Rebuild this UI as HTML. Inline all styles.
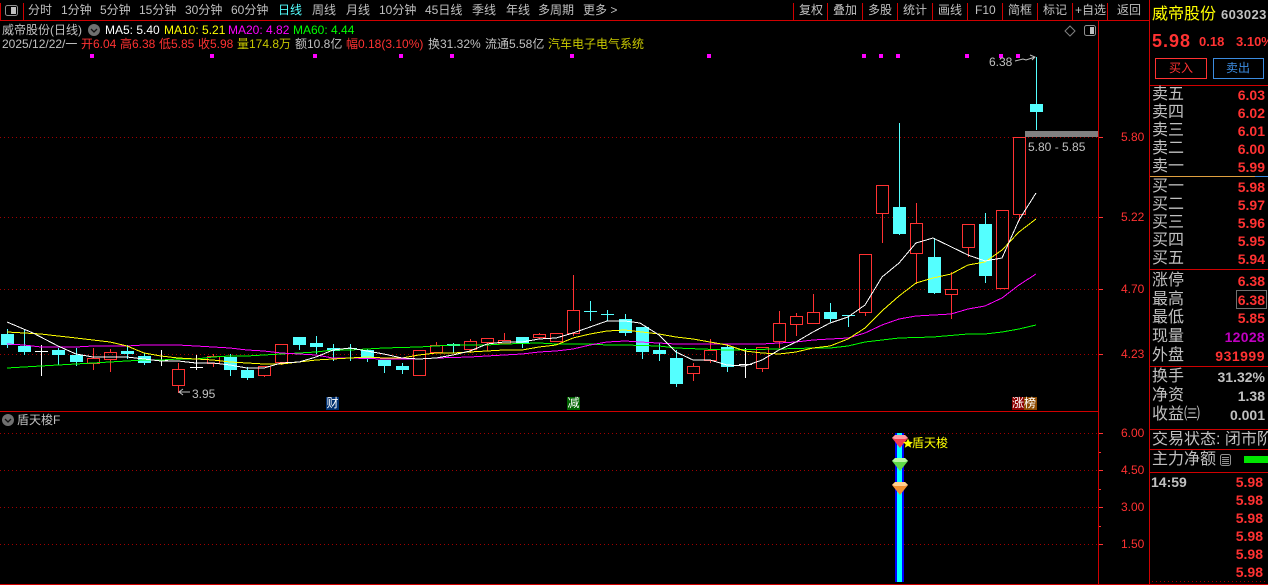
<!DOCTYPE html>
<html><head><meta charset="utf-8"><style>
html,body{margin:0;padding:0;background:#000;width:1268px;height:585px;overflow:hidden}
#r{position:relative;width:1268px;height:585px;background:#000;overflow:hidden;font-family:"Liberation Sans","WenQuanYi Zen Hei",sans-serif;font-size:12px;color:#c0c0c0}
#r div{position:absolute;white-space:nowrap}
.t{height:20px;line-height:20px;top:0}
.h{height:14px;line-height:14px;top:23px}
.k{height:14px;line-height:14px;top:37px}
.red{color:#ff3232}.y{color:#c8c800}
.l{left:1152px;font-size:16px;height:18px;line-height:18px;color:#c0c0c0}
.v{right:3px;font-size:14px;font-weight:bold;height:18px;line-height:18px;color:#ff3232}
.a{font-size:12px;color:#ff3232;left:1121px;height:14px;line-height:14px}
</style></head><body><div id="r">
<svg width="1268" height="585" style="position:absolute;left:0;top:0">
<defs><pattern id="d" width="4" height="1" patternUnits="userSpaceOnUse"><rect width="1" height="1" fill="#a00000"/></pattern></defs>
<g shape-rendering="crispEdges">
<rect x="0" y="137" width="1098" height="1" fill="url(#d)"/><rect x="0" y="217" width="1098" height="1" fill="url(#d)"/><rect x="0" y="289" width="1098" height="1" fill="url(#d)"/><rect x="0" y="354" width="1098" height="1" fill="url(#d)"/><rect x="0" y="433" width="1098" height="1" fill="url(#d)"/><rect x="0" y="470" width="1098" height="1" fill="url(#d)"/><rect x="0" y="507" width="1098" height="1" fill="url(#d)"/><rect x="0" y="544" width="1098" height="1" fill="url(#d)"/><rect x="1152" y="581" width="116" height="1" fill="url(#d)"/>
<path d="M0 20.5H1149M0 411.500H1098M1150 85.500H1268M1150 269.500H1268M1150 366.500H1268M1150 429.500H1268M1150 449.500H1268M1150 472.500H1268M0 584.500H1268M1098.500 20V585M1149.500 0V585M.5 3V20M23.500 3V20M793.500 3V20M827.500 3V20M862.500 3V20M897.500 3V20M932.500 3V20M967.500 3V20M1002.500 3V20M1037.500 3V20M1072.500 3V20M1107.500 3V20" stroke="#d00000" fill="none"/>
<path d="M1150 176.500H1255" stroke="#e0a040"/><path d="M1255 176.500H1268" stroke="#3c8ce0"/>
<path d="M1099 137.500h4M1099 217.500h4M1099 289.500h4M1099 354.500h4M1099 433.500h4M1099 452.500h2M1099 470.500h4M1099 489.500h2M1099 507.500h4M1099 526.500h2M1099 544.500h4" stroke="#ff3232"/>
<path fill="#ff00ff" d="M90 54h4v4h-4zM210 54h4v4h-4zM313 54h4v4h-4zM399 54h4v4h-4zM450 54h4v4h-4zM570 54h4v4h-4zM707 54h4v4h-4zM862 54h4v4h-4zM879 54h4v4h-4zM896 54h4v4h-4zM965 54h4v4h-4zM999 54h4v4h-4zM1016 54h4v4h-4z"/>
<rect x="1025" y="131" width="73" height="6" fill="#808080"/>
<path stroke="#54ffff" fill="none" d="M7.500 329V348M24.500 330V355M58.500 348V365M76.500 348V366M127.500 345V359M144.500 353V365M230.500 354V376M247.500 367V380M299.500 337V350M316.500 336V354M333.500 344V361M367.500 349V362M384.500 360V373M402.500 363V374M453.500 343V353M522.500 337V348M625.500 314V336M642.500 327V359M659.500 343V361M676.500 350V387M727.500 345V372M830.500 303V322M899.500 123V235M934.500 238V294M985.500 213V283M1036.500 57V130M350.500 344V361M344 348.500H357M590.500 301V321M584 311.500H597M607.500 310V321M601 314.500H614M848.500 315V327M842 315.500H855"/>
<path fill="#54ffff" d="M1 334h13v11h-13zM18 346h13v6h-13zM52 350h13v5h-13zM70 355h13v7h-13zM121 351h13v3h-13zM138 356h13v7h-13zM224 357h13v13h-13zM241 370h13v8h-13zM293 337h13v8h-13zM310 343h13v4h-13zM327 348h13v3h-13zM361 350h13v8h-13zM378 360h13v6h-13zM396 366h13v4h-13zM447 344h13v2h-13zM516 337h13v6h-13zM619 319h13v14h-13zM636 327h13v25h-13zM653 350h13v4h-13zM670 358h13v26h-13zM721 347h13v20h-13zM824 312h13v7h-13zM893 207h13v27h-13zM928 257h13v36h-13zM979 224h13v52h-13zM1030 104h13v8h-13z"/>
<path stroke="#ffffff" fill="none" d="M41.500 345V376M35 351.500H48M161.500 350V366M155 360.500H168M196.500 355V370M190 367.500H203M745.500 348V378M739 364.500H752"/>
<path stroke="#ff3232" fill="none" d="M93.500 348V358M93.500 363V370M110.500 349V352M110.500 359V372M178.500 363V369M178.500 385V393M213.500 354V356M213.500 363V367M264.500 375V377M281.500 362V365M436.500 342V345M470.500 339V341M470.500 349V353M487.500 342V351M504.500 333V340M539.500 333V334M539.500 337V339M573.500 275V310M573.500 333V336M693.500 363V366M693.500 373V381M710.500 339V350M710.500 360V363M762.500 368V372M779.500 311V323M779.500 341V348M796.500 313V316M796.500 324V336M813.500 294V312M865.500 312V316M882.500 213V243M916.500 203V223M916.500 253V284M951.500 272V289M951.500 294V319M968.500 247V257M1019.500 214V221
M87.500 358.500h12v5h-12zM104.500 352.500h12v7h-12zM172.500 369.500h12v16h-12zM207.500 356.500h12v7h-12zM258.500 366.500h12v9h-12zM275.500 344.500h12v18h-12zM413.500 350.500h12v25h-12zM430.500 345.500h12v7h-12zM464.500 341.500h12v8h-12zM481.500 338.500h12v4h-12zM498.500 340.500h12v3h-12zM533.500 334.500h12v3h-12zM550.500 333.500h12v8h-12zM567.500 310.500h12v23h-12zM687.500 366.500h12v7h-12zM704.500 350.500h12v10h-12zM756.500 347.500h12v21h-12zM773.500 323.500h12v18h-12zM790.500 316.500h12v8h-12zM807.500 312.500h12v11h-12zM859.500 254.500h12v58h-12zM876.500 185.500h12v28h-12zM910.500 223.500h12v30h-12zM945.500 289.500h12v5h-12zM962.500 224.500h12v23h-12zM996.500 210.500h12v78h-12zM1013.500 137.500h12v77h-12z"/>
<polyline fill="none" stroke="#00ff00" points="7,368 24,367 41,366 58,365 76,364 93,363 110,362 127,361 144,360 161,360 178,359 196,359 213,357 230,356 247,356 264,355 281,354 299,353 316,352 333,350 350,350 384,348 419,347 436,346 453,345 487,345 504,344 539,343 556,344 590,344 607,345 625,345 659,346 676,348 727,350 779,349 813,348 830,348 848,346 865,342 882,340 899,338 933,337 968,334 985,334 1002,332 1019,329 1036,325"/>
<polyline fill="none" stroke="#ff00ff" points="7,344 24,345 41,347 58,347 76,347 93,346 127,346 144,345 178,345 196,346 213,347 230,348 247,350 264,351 281,353 299,354 316,355 333,358 350,358 384,359 419,359 436,358 470,357 487,356 504,355 522,354 539,352 556,351 573,349 590,345 607,342 625,341 640,342 676,344 710,344 762,344 779,343 796,342 813,340 830,339 848,338 865,333 882,325 899,319 916,316 951,314 968,309 985,306 1002,298 1019,285 1036,274"/>
<polyline fill="none" stroke="#ffff00" points="7,332 24,333 41,334 58,336 76,338 93,340 110,342 127,346 144,353 161,356 178,358 196,359 213,360 230,362 247,363 264,364 281,364 299,362 316,360 333,359 350,358 367,357 384,358 402,358 419,355 436,353 453,353 470,352 487,351 504,350 522,350 539,347 556,345 573,338 590,334 607,331 625,330 642,332 659,334 676,337 693,339 710,342 727,345 745,351 762,353 779,354 796,352 813,348 830,346 848,339 865,328 883,310 899,296 916,283 933,278 951,274 968,265 985,262 1002,250 1019,232 1036,219"/>
<polyline fill="none" stroke="#ffffff" points="7,322 33,333 58,346 76,354 93,357 127,357 144,359 161,361 178,361 196,363 213,363 230,365 247,368 264,368 281,363 299,362 316,357 333,350 350,348 367,351 384,354 402,358 419,359 436,358 453,355 470,351 487,344 504,342 522,342 539,339 556,338 573,333 590,327 607,321 625,321 640,323 659,335 676,352 693,360 710,360 727,365 745,366 762,360 779,350 796,342 813,332 830,323 848,317 865,305 882,277 899,263 916,243 933,238 968,255 985,261 1002,258 1019,220 1036,193"/>
<rect x="895" y="433" width="9" height="149" fill="#0000ff"/><rect x="897" y="433" width="5" height="149" fill="#00ffff"/>
</g>
<path d="M892 438l3-3h10l3 3-8 10z" fill="#f03c50"/><path d="M892 438l3-3h10l3 3-3 1h-10z" fill="#ff9aa0"/>
<path d="M892 461l3-3h10l3 3-8 10z" fill="#60d848"/><path d="M892 461l3-3h10l3 3-3 1h-10z" fill="#b8f8a0"/>
<path d="M892 485l3-3h10l3 3-8 10z" fill="#f09030"/><path d="M892 485l3-3h10l3 3-3 1h-10z" fill="#ffd090"/>
<path d="M908 438.500l1.500 3.300 3.500.3-2.700 2.300.9 3.400-3.200-1.900-3.200 1.900.9-3.400-2.700-2.300 3.500-.3z" fill="#ffff00"/>
<path d="M1015 61l8-2 3 1 9-3M1030 55l5 2-3 3" stroke="#c0c0c0" fill="none"/>
<path d="M179 392h11M183 389l-4 3 4 3" stroke="#c0c0c0" fill="none"/>
<rect x="5.500" y="5.500" width="12" height="10" rx="2" fill="none" stroke="#909090"/><rect x="11" y="7" width="5" height="7" fill="#c0c0c0"/>
<rect x="1084.500" y="25.500" width="11" height="10" rx="2" fill="none" stroke="#909090"/><rect x="1090" y="27" width="4" height="7" fill="#c0c0c0"/>
<path d="M1070 26l5 5-5 5-5-5z" fill="none" stroke="#808080"/>
<circle cx="94" cy="30" r="6" fill="#707070"/><path d="M91 29l3 3 3-3" stroke="#111" fill="none" stroke-width="1.300"/>
<circle cx="8" cy="420" r="6" fill="#707070"/><path d="M5 419l3 3 3-3" stroke="#111" fill="none" stroke-width="1.300"/>
<rect x="1155.500" y="58.500" width="51" height="20" fill="none" stroke="#ff3232"/>
<rect x="1213.500" y="58.500" width="50" height="20" fill="none" stroke="#3c8ce0"/>
<rect x="1236.500" y="290.500" width="30" height="18" fill="none" stroke="#707070"/>
<rect x="1220.500" y="454.500" width="10" height="11" rx="2" fill="none" stroke="#909090"/><path d="M1222 457.500h7M1222 459.500h7M1222 461.500h7M1222 463.500h7" stroke="#909090"/>
<rect x="1244" y="456" width="24" height="7" fill="#00e600"/>
<rect x="326" y="397" width="13" height="13" fill="#003070"/><rect x="567" y="397" width="13" height="13" fill="#006400"/>
<rect x="1012" y="397" width="12" height="13" fill="#8c0000"/><rect x="1024" y="397" width="13" height="13" fill="#8c4a00"/>
</svg>

<div class="t" style="left:28px">分时</div><div class="t" style="left:61px">1分钟</div><div class="t" style="left:100px">5分钟</div><div class="t" style="left:139px">15分钟</div><div class="t" style="left:185px">30分钟</div><div class="t" style="left:231px">60分钟</div><div class="t" style="left:278px;color:#54ffff">日线</div><div class="t" style="left:312px">周线</div><div class="t" style="left:346px">月线</div><div class="t" style="left:379px">10分钟</div><div class="t" style="left:425px">45日线</div><div class="t" style="left:472px">季线</div><div class="t" style="left:506px">年线</div><div class="t" style="left:538px">多周期</div><div class="t" style="left:583px">更多 &gt;</div>
<div class="t" style="left:799px">复权</div><div class="t" style="left:833px">叠加</div><div class="t" style="left:868px">多股</div><div class="t" style="left:903px">统计</div><div class="t" style="left:938px">画线</div><div class="t" style="left:975px">F10</div><div class="t" style="left:1008px">简框</div><div class="t" style="left:1043px">标记</div><div class="t" style="left:1075px">+自选</div><div class="t" style="left:1117px">返回</div>

<div class="h" style="left:2px">威帝股份(日线)</div>
<div class="h" style="left:105px;color:#fff">MA5: 5.40</div><div class="h" style="left:164px;color:#ffff00">MA10: 5.21</div><div class="h" style="left:228px;color:#ff00ff">MA20: 4.82</div><div class="h" style="left:293px;color:#00ff00">MA60: 4.44</div>

<div class="k" style="left:2px">2025/12/22/一</div><div class="k red" style="left:81px">开6.04</div><div class="k red" style="left:120px">高6.38</div><div class="k red" style="left:159px">低5.85</div><div class="k red" style="left:198px">收5.98</div><div class="k y" style="left:237px">量174.8万</div><div class="k" style="left:295px">额10.8亿</div><div class="k red" style="left:346px">幅0.18(3.10%)</div><div class="k" style="left:428px">换31.32%</div><div class="k" style="left:485px">流通5.58亿</div><div class="k y" style="left:548px">汽车电子电气系统</div>

<div style="left:989px;top:55px;line-height:14px">6.38</div>
<div style="left:192px;top:387px;line-height:14px">3.95</div>
<div style="left:1028px;top:140px;line-height:14px">5.80 - 5.85</div>
<div style="left:326px;top:397px;width:13px;text-align:center;line-height:13px;color:#fff">财</div>
<div style="left:567px;top:397px;width:13px;text-align:center;line-height:13px;color:#fff">减</div>
<div style="left:1012px;top:397px;line-height:13px;color:#fff">涨榜</div>
<div style="left:17px;top:413px;line-height:14px">盾天梭F</div>
<div style="left:912px;top:436px;line-height:14px;color:#ffff00">盾天梭</div>

<div class="a" style="top:130px">5.80</div><div class="a" style="top:210px">5.22</div><div class="a" style="top:282px">4.70</div><div class="a" style="top:347px">4.23</div>
<div class="a" style="top:426px">6.00</div><div class="a" style="top:463px">4.50</div><div class="a" style="top:500px">3.00</div><div class="a" style="top:537px">1.50</div>

<div style="left:1152px;top:6px;font-size:16px;line-height:18px;color:#ffff00">威帝股份</div>
<div style="left:1221px;top:7px;font-size:13px;font-weight:bold;line-height:16px;letter-spacing:.4px">603023</div>
<div style="left:1152px;top:31px;font-size:18px;font-weight:bold;line-height:20px;letter-spacing:1px;color:#ff3232">5.98</div>
<div style="left:1199px;top:34px;font-size:13px;font-weight:bold;line-height:16px;color:#ff3232">0.18</div>
<div style="left:1236px;top:34px;font-size:13px;font-weight:bold;line-height:16px;color:#ff3232">3.10%</div>
<div style="left:1169px;top:61px;line-height:14px;color:#ff3232">买入</div>
<div style="left:1226px;top:61px;line-height:14px;color:#3c8ce0">卖出</div>

<div class="l" style="top:86px">卖五</div><div class="v" style="top:86px">6.03</div>
<div class="l" style="top:104px">卖四</div><div class="v" style="top:104px">6.02</div>
<div class="l" style="top:122px">卖三</div><div class="v" style="top:122px">6.01</div>
<div class="l" style="top:140px">卖二</div><div class="v" style="top:140px">6.00</div>
<div class="l" style="top:158px">卖一</div><div class="v" style="top:158px">5.99</div>
<div class="l" style="top:178px">买一</div><div class="v" style="top:178px">5.98</div>
<div class="l" style="top:196px">买二</div><div class="v" style="top:196px">5.97</div>
<div class="l" style="top:214px">买三</div><div class="v" style="top:214px">5.96</div>
<div class="l" style="top:232px">买四</div><div class="v" style="top:232px">5.95</div>
<div class="l" style="top:250px">买五</div><div class="v" style="top:250px">5.94</div>
<div class="l" style="top:272px">涨停</div><div class="v" style="top:272px">6.38</div>
<div class="l" style="top:291px">最高</div><div class="v" style="top:291px">6.38</div>
<div class="l" style="top:309px">最低</div><div class="v" style="top:309px">5.85</div>
<div class="l" style="top:328px">现量</div><div class="v" style="top:328px;color:#c000c0;letter-spacing:.3px">12028</div>
<div class="l" style="top:347px">外盘</div><div class="v" style="top:347px;letter-spacing:.5px">931999</div>
<div class="l" style="top:368px">换手</div><div class="v" style="top:368px;color:#c0c0c0">31.32%</div>
<div class="l" style="top:387px">净资</div><div class="v" style="top:387px;color:#c0c0c0">1.38</div>
<div class="l" style="top:406px">收益㈢</div><div class="v" style="top:406px;color:#c0c0c0">0.001</div>
<div class="l" style="top:431px;width:116px;overflow:hidden">交易状态: 闭市阶段</div>
<div class="l" style="top:451px">主力净额</div>
<div style="left:1151px;top:474px;font-size:14px;font-weight:bold;line-height:16px">14:59</div>
<div class="v" style="top:473px;right:5px">5.98</div><div class="v" style="top:491px;right:5px">5.98</div><div class="v" style="top:509px;right:5px">5.98</div><div class="v" style="top:527px;right:5px">5.98</div><div class="v" style="top:545px;right:5px">5.98</div><div class="v" style="top:563px;right:5px">5.98</div>
</div></body></html>
